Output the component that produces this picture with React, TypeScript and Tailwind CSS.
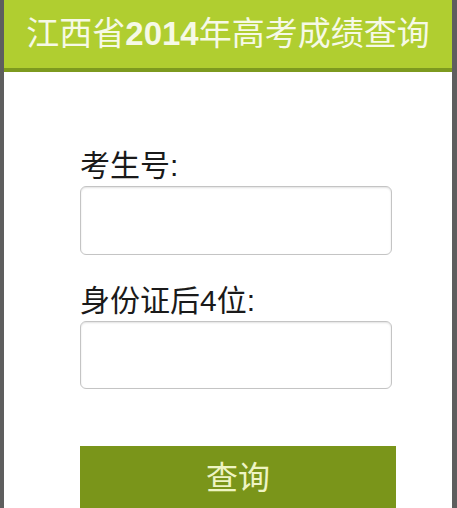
export default function App() {
  const font = { fontFamily: '"Liberation Sans", "Noto Sans CJK SC", sans-serif' };
  return (
    <div className="flex h-[508px] w-[457px] overflow-hidden bg-[#5e5e5e]" style={font}>
      <div className="ml-[4px] mr-[5px] flex flex-1 flex-col bg-white">
        <div className="flex h-[72px] shrink-0 items-center justify-center border-b-4 border-[#7d9a1f] bg-[#b0ce30] pb-[2px]">
          <h1 className="whitespace-nowrap text-[33px] leading-none text-[#f6f9e6]">
            江西省<span className="font-bold">2014</span>年高考成绩查询
          </h1>
        </div>
        <div className="flex flex-col pl-[76px] pr-[56px] pt-[77px]">
          <label className="text-[30px] leading-[34px] text-[#1a1a1a]">考生号:</label>
          <div className="mt-[3px] h-[69px] w-[312px] rounded-[6px] border border-[#c4c4c4] bg-white shadow-[inset_0_1px_2px_rgba(0,0,0,0.12)]" />
          <label className="mt-[29px] text-[30px] leading-[34px] text-[#1a1a1a]">身份证后4位:</label>
          <div className="mt-[3px] h-[68px] w-[312px] rounded-[6px] border border-[#c4c4c4] bg-white shadow-[inset_0_1px_2px_rgba(0,0,0,0.12)]" />
          <button className="mt-[57px] flex h-[64px] w-[316px] shrink-0 items-start justify-center bg-[#7a951a] pt-[13px] text-[32px] leading-[38px] text-[#eef4c4]">
            查询
          </button>
        </div>
      </div>
    </div>
  );
}
